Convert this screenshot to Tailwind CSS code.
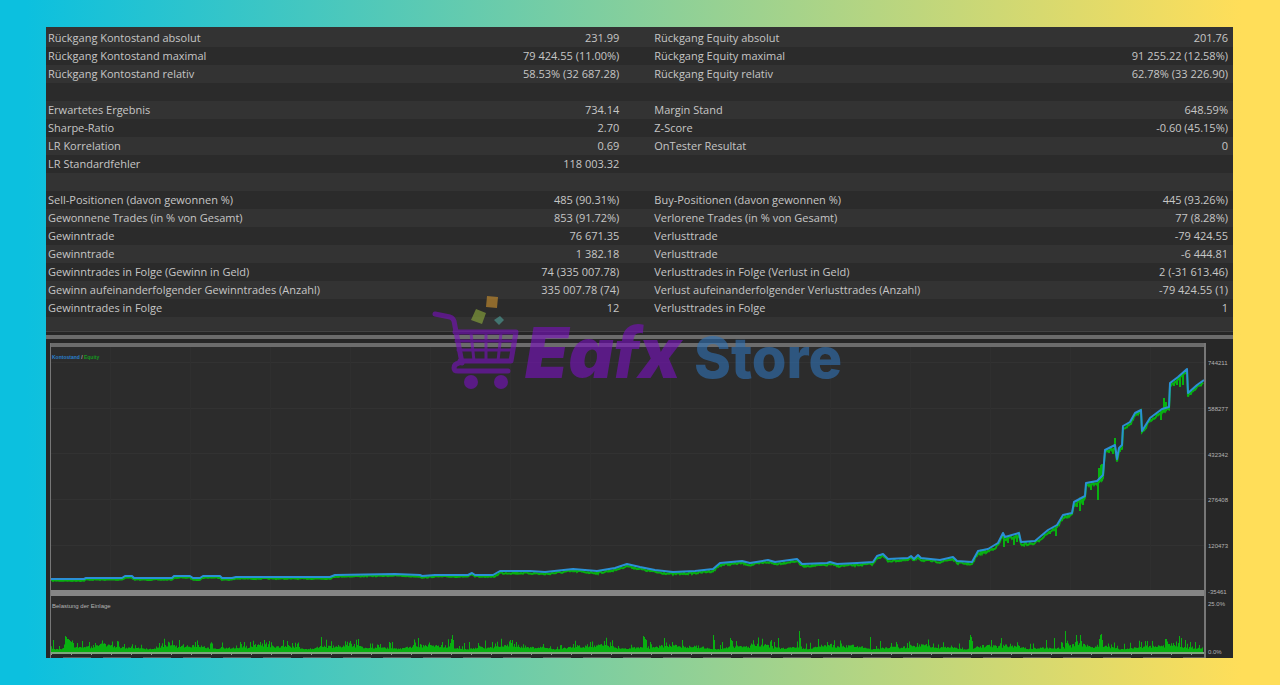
<!DOCTYPE html>
<html lang="de">
  <head>
    <meta charset="UTF-8" />
    <meta name="viewport" content="width=device-width, initial-scale=1.0" />
    <script src="https://cdn.jsdelivr.net/npm/@tailwindcss/browser@4"></script>
    <title>Eafx Store - Backtest</title>
  </head>
  <body class="min-h-screen bg-linear-to-r/srgb from-[#0cc0df] from-2% to-[#ffde59] to-97% py-[27px] pl-[46px] pr-[47px] font-['Open_Sans',sans-serif]">
    <main class="relative overflow-hidden bg-[#272727]">
      <!-- Statistik -->
      <div class="bg-[#333333] pt-[2px] pb-[14px]">
        <table class="w-full table-fixed border-collapse text-[11px] leading-[18px] text-[#c6c6c6]">
          <colgroup>
            <col class="w-[30%]" />
            <col class="w-[18.3%]" />
            <col class="w-[30%]" />
            <col />
          </colgroup>
          <tbody id="stats"></tbody>
        </table>
      </div>

      <!-- Trennlinie -->
      <div class="h-px bg-[#444444]"></div>
      <div class="mt-[3px] h-1 bg-[#6c6c6c]"></div>

      <!-- Diagramm -->
      <div class="mt-1 flex pl-1 font-['Liberation_Sans',sans-serif] text-[6px] leading-3 text-[#b4b4b4]">
        <div class="min-w-0 flex-1 border-l border-r-2 border-[#777777]">
          <div class="relative h-[247px] border-t-4 border-[#6c6c6c] bg-[#2c2c2c]">
            <svg class="block h-full w-full" viewBox="51 347 1153 243" preserveAspectRatio="none" fill="none">
              <path stroke="#323232" d="M51 362.5H1206M51 408.5H1206M51 453.5H1206M51 499.5H1206M51 545.5H1206" />
              <path stroke="#2f2f2f" d="M110.5 347V590M190.5 347V590M270.5 347V590M350.5 347V590M430.5 347V590M510.5 347V590M590.5 347V590M670.5 347V590M750.5 347V590M830.5 347V590M910.5 347V590M990.5 347V590M1070.5 347V590M1150.5 347V590" />
              <path id="equity" stroke="#08b010" stroke-width="2" />
              <path id="balance" stroke="#2a90d6" stroke-width="2" stroke-linejoin="round" />
            </svg>
            <p class="absolute top-1 left-px text-[5px] font-bold"><span class="text-[#2a80cc]">Kontostand</span> / <span class="text-[#14981e]">Equity</span></p>
          </div>
          <div class="h-[6px] bg-[#858585]"></div>
          <div class="relative h-[58px] border-b-2 border-[#7fa57f] bg-[#2c2c2c]">
            <svg class="block h-full w-full" viewBox="51 596 1153 56" preserveAspectRatio="none">
              <path id="load" fill="#08b010" />
            </svg>
            <p class="absolute top-1 left-px">Belastung der Einlage</p>
          </div>
          <div class="h-px bg-[repeating-linear-gradient(90deg,#999_0px,#999_1px,#292929_1px,#292929_20px)]"></div>
          <div class="mt-[2px] h-px bg-[repeating-linear-gradient(90deg,#292929_0px,#292929_12px,#5c5c5c_12px,#5c5c5c_40px)]"></div>
        </div>
        <div class="flex w-[27px] shrink-0 flex-col pt-[14px] pl-[2px] whitespace-nowrap">
          <span class="h-[46px]">744211</span>
          <span class="h-[46px]">588277</span>
          <span class="h-[45px]">432342</span>
          <span class="h-[46px]">276408</span>
          <span class="h-[46px]">120473</span>
          <span class="h-3">-35461</span>
          <span class="h-12">25.0%</span>
          <span class="h-3">0.0%</span>
        </div>
      </div>

      <!-- Logo -->
      <div class="absolute top-[267px] left-[384px]" role="img" aria-label="Eafx Store">
        <svg width="420" height="100" viewBox="430 294 420 100">
          <g opacity="0.6">
            <g stroke="#7a10c0" fill="none" stroke-linecap="round" stroke-linejoin="round">
              <path stroke-width="5" d="M435 314L450 317Q453 318 454 321L462 363M459 363Q454 364 454 368Q454 371 458 371H508" />
              <path stroke-width="5" d="M455 332H516L511 361H460" />
              <path stroke-width="3" d="M456 341H513M458 350H512M471 333L474 361M486 333V361M501 333L498 361" />
            </g>
            <circle cx="471" cy="382" r="7" fill="#7a10c0" />
            <circle cx="501" cy="382" r="7" fill="#7a10c0" />
            <path fill="#d2942f" d="M487 296L498 297L497 308L486 307Z" />
            <path fill="#8fae3c" d="M476 309L486 313L482 324L471 320Z" />
            <path fill="#4fa19b" d="M500 316L504 320L499 325L494 320Z" />
            <text x="525" y="378" fill="#7a10c0" class="font-[Inter] text-[70px] font-black italic [font-feature-settings:'cv11']">Ea<tspan class="font-[Roboto]">f</tspan>x</text>
            <text x="694" y="378" fill="#3073b7" class="font-[Inter] text-[56px] font-extrabold">Store</text>
          </g>
        </svg>
      </div>
    </main>

    <script>
      const stats = [
        ["Rückgang Kontostand absolut", "231.99", "Rückgang Equity absolut", "201.76"],
        ["Rückgang Kontostand maximal", "79 424.55 (11.00%)", "Rückgang Equity maximal", "91 255.22 (12.58%)"],
        ["Rückgang Kontostand relativ", "58.53% (32 687.28)", "Rückgang Equity relativ", "62.78% (33 226.90)"],
        ["", "", "", ""],
        ["Erwartetes Ergebnis", "734.14", "Margin Stand", "648.59%"],
        ["Sharpe-Ratio", "2.70", "Z-Score", "-0.60 (45.15%)"],
        ["LR Korrelation", "0.69", "OnTester Resultat", "0"],
        ["LR Standardfehler", "118 003.32", "", ""],
        ["", "", "", ""],
        ["Sell-Positionen (davon gewonnen %)", "485 (90.31%)", "Buy-Positionen (davon gewonnen %)", "445 (93.26%)"],
        ["Gewonnene Trades (in % von Gesamt)", "853 (91.72%)", "Verlorene Trades (in % von Gesamt)", "77 (8.28%)"],
        ["Gewinntrade", "76 671.35", "Verlusttrade", "-79 424.55"],
        ["Gewinntrade", "1 382.18", "Verlusttrade", "-6 444.81"],
        ["Gewinntrades in Folge (Gewinn in Geld)", "74 (335 007.78)", "Verlusttrades in Folge (Verlust in Geld)", "2 (-31 613.46)"],
        ["Gewinn aufeinanderfolgender Gewinntrades (Anzahl)", "335 007.78 (74)", "Verlust aufeinanderfolgender Verlusttrades (Anzahl)", "-79 424.55 (1)"],
        ["Gewinntrades in Folge", "12", "Verlusttrades in Folge", "1"],
      ];

      document.getElementById("stats").innerHTML = stats
        .map(
          ([a, b, c, d]) => `
            <tr class="h-[18px] odd:bg-[#333333] even:bg-[#2b2b2b]">
              <td class="p-0 pl-[2px] whitespace-nowrap">${a}</td>
              <td class="p-0 text-right whitespace-nowrap">${b}</td>
              <td class="p-0 pl-[35px] whitespace-nowrap">${c}</td>
              <td class="p-0 pr-[5px] text-right whitespace-nowrap">${d}</td>
            </tr>`
        )
        .join("");

      // Kontostand
      const balance = [
        [51, 579], [84, 579], [86, 578], [122, 578], [125, 576], [132, 576], [134, 578], [172, 578], [174, 576], [190, 576],
        [193, 578], [200, 578], [203, 576], [220, 576], [222, 578], [232, 578], [236, 577], [330, 577], [335, 575], [395, 574],
        [420, 575], [422, 576], [435, 575], [468, 575], [472, 573], [475, 575], [493, 575], [500, 571], [530, 571], [545, 572],
        [573, 569], [597, 571], [615, 568], [627, 564], [640, 567], [655, 570], [673, 572], [695, 571], [713, 569], [720, 563],
        [742, 561], [750, 563], [768, 560], [775, 562], [797, 559], [802, 564], [827, 563], [830, 562], [837, 564], [857, 563],
        [873, 562], [877, 556], [883, 554], [888, 559], [908, 558], [911, 556], [914, 559], [918, 555], [921, 558], [940, 560],
        [953, 557], [957, 561], [972, 562], [978, 551], [988, 549], [998, 543], [1003, 533], [1005, 537], [1019, 533],
        [1021, 542], [1035, 541], [1048, 530], [1057, 525], [1063, 515], [1072, 513], [1074, 502], [1085, 496], [1086, 483],
        [1097, 481], [1103, 475], [1105, 450], [1115, 445], [1117, 459], [1119, 448], [1122, 445], [1123, 426], [1130, 422],
        [1135, 413], [1141, 410], [1142, 431], [1150, 418], [1162, 409], [1169, 407], [1170, 383], [1178, 377], [1187, 369],
        [1188, 393], [1197, 385], [1204, 380],
      ];
      document.getElementById("balance").setAttribute("d", "M" + balance.map((p) => p.join(" ")).join("L"));

      let seed = 7;
      const rnd = () => (seed = (seed * 16807) % 2147483647) / 2147483647;

      const balanceAt = (x) => {
        const i = Math.max(1, balance.findIndex((p) => p[0] >= x));
        const [x0, y0] = balance[i - 1];
        const [x1, y1] = balance[i];
        return y0 + ((y1 - y0) * (x - x0)) / (x1 - x0);
      };

      // Equity: Ausschläge um den Kontostand
      const swings = { 1004: 547, 1008: 543, 1014: 545, 1017: 542, 1056: 536, 1050: 534, 1077: 507, 1080: 511, 1083: 505, 1091: 490, 1098: 500,
        1099: 468, 1101: 465, 1102: 464, 1109: 453, 1113: 454, 1115: 438, 1120: 452, 1161: 420, 1164: 398, 1166: 402, 1174: 386, 1177: 385, 1180: 387, 1183: 385, 1190: 395, 1194: 391 };
      let equity = "M51 580";
      for (let x = 52; x < 1204; x++) {
        const y = balanceAt(x);
        const low = y + 1 + rnd() * (x > 970 ? 3 : x > 490 ? 2 : 1);
        equity += `L${x} ${low.toFixed(1)}`;
        if (swings[x]) equity += `V${swings[x]}V${low.toFixed(1)}`;
      }
      document.getElementById("equity").setAttribute("d", equity);

      // Belastung der Einlage
      const peaks = { 53: 12, 65: 16, 66: 15, 67: 13, 68: 13, 69: 12, 70: 11, 71: 10, 73: 9, 77: 9, 95: 9, 124: 8, 179: 12, 195: 10, 250: 10, 287: 11, 321: 15, 392: 10, 418: 14,
        442: 10, 450: 9, 451: 13, 452: 17, 453: 12, 478: 9, 516: 10, 590: 10, 643: 16, 644: 15, 645: 13, 646: 12, 664: 14, 682: 12, 713: 17, 714: 12, 730: 14, 731: 12, 732: 11, 778: 14,
        799: 21, 800: 14, 818: 13, 870: 15, 880: 11, 969: 12, 970: 17, 971: 15, 972: 11, 1001: 14, 1046: 12, 1054: 14, 1065: 21, 1076: 17, 1080: 17, 1099: 13,
        1100: 17, 1101: 18, 1102: 12, 1145: 11, 1165: 13, 1179: 16, 1181: 14, 1185: 12, 1190: 10, 1199: 7 };
      let load = "";
      for (let x = 51; x < 1203; x++) {
        const wave = 4 + 2 * Math.sin(x / 13) + Math.sin(x / 5);
        const h = peaks[x] || 2 + Math.max(0, wave * (0.4 + 0.6 * rnd())) + (rnd() > 0.8 ? rnd() * 7 : 0);
        load += `M${x} 652v-${h.toFixed(1)}h1V652z`;
      }
      document.getElementById("load").setAttribute("d", load);
    </script>
  </body>
</html>
